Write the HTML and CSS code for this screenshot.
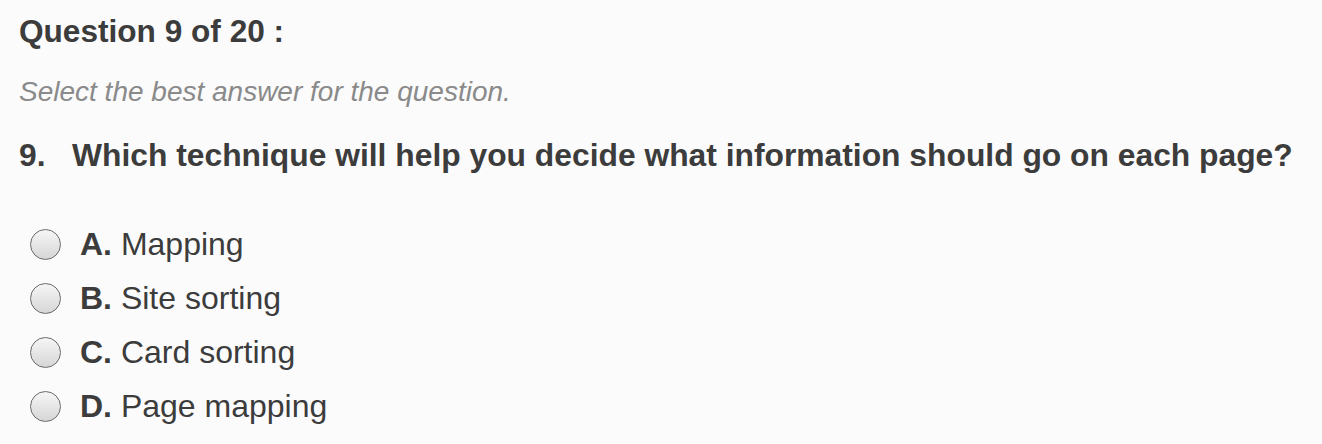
FILE: index.html
```html
<!DOCTYPE html>
<html>
<head>
<meta charset="utf-8">
<link rel="stylesheet" href="styles.css">
</head>
<body>
<div class="quiz">
  <h1 class="title">Question 9 of 20 :</h1>
  <p class="hint">Select the best answer for the question.</p>
  <h2 class="question"><span class="num">9.</span>Which technique will help you decide what information should go on each page?</h2>
  <ul class="options">
    <li class="option"><span class="radio"></span><span class="label"><b>A.</b> Mapping</span></li>
    <li class="option"><span class="radio"></span><span class="label"><b>B.</b> Site sorting</span></li>
    <li class="option"><span class="radio"></span><span class="label"><b>C.</b> Card sorting</span></li>
    <li class="option"><span class="radio"></span><span class="label"><b>D.</b> Page mapping</span></li>
  </ul>
</div>
</body>
</html>
```
FILE: styles.css
```css
html, body {
  margin: 0;
  padding: 0;
  background: #fbfbfb;
}
body {
  font-family: "Liberation Sans", Arial, Helvetica, sans-serif;
  color: #3c3c3c;
}
.quiz {
  padding: 12px 19px 0 19px;
}
.title {
  margin: 0;
  font-size: 31.6px;
  font-weight: bold;
  line-height: 38px;
}
.hint {
  margin: 24px 0 0 0;
  font-size: 28px;
  font-style: italic;
  color: #8a8a8a;
  line-height: 36px;
}
.question {
  margin: 26px 0 0 0;
  font-size: 31.8px;
  font-weight: bold;
  line-height: 38px;
  white-space: nowrap;
}
.num {
  display: inline-block;
  width: 53px;
}
.options {
  list-style: none;
  margin: 49px 0 0 0;
  padding: 0 0 0 11px;
  display: flex;
  flex-direction: column;
  gap: 12px;
}
.option {
  display: flex;
  align-items: center;
  gap: 19px;
  height: 42px;
  font-size: 32px;
}
.radio {
  width: 31px;
  height: 31px;
  border-radius: 50%;
  border: 1.5px solid #6a6a6a;
  background: linear-gradient(#f6f6f6, #d6d6d6);
  box-sizing: border-box;
  flex: none;
}
.label b {
  font-weight: bold;
}
```
